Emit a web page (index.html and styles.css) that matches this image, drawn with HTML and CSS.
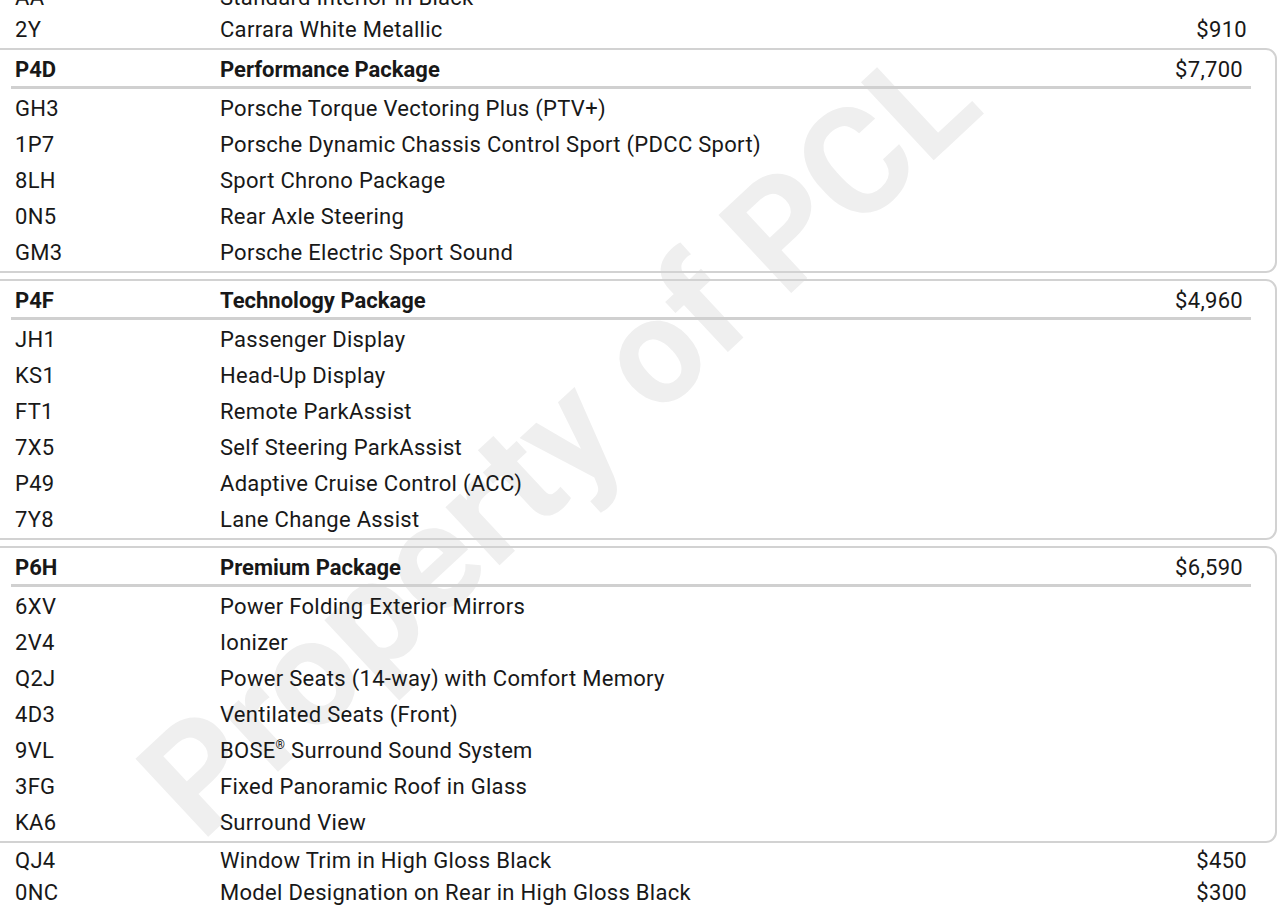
FILE: index.html
```html
<!DOCTYPE html>
<html lang="en">
<head>
<meta charset="utf-8">
<title>Options</title>
<link rel="stylesheet" href="styles.css">
</head>
<body>
<div class="sheet">
  <div class="watermark">Property of PCL</div>

  <div class="row loose"><span class="code">AA</span><span class="desc">Standard Interior in Black</span><span class="price"></span></div>
  <div class="row loose"><span class="code">2Y</span><span class="desc">Carrara White Metallic</span><span class="price">$910</span></div>

  <div class="box">
    <div class="row head"><span class="code">P4D</span><span class="desc">Performance Package</span><span class="price">$7,700</span></div>
    <div class="items">
      <div class="row item"><span class="code">GH3</span><span class="desc">Porsche Torque Vectoring Plus (PTV+)</span><span class="price"></span></div>
      <div class="row item"><span class="code">1P7</span><span class="desc">Porsche Dynamic Chassis Control Sport (PDCC Sport)</span><span class="price"></span></div>
      <div class="row item"><span class="code">8LH</span><span class="desc">Sport Chrono Package</span><span class="price"></span></div>
      <div class="row item"><span class="code">0N5</span><span class="desc">Rear Axle Steering</span><span class="price"></span></div>
      <div class="row item"><span class="code">GM3</span><span class="desc">Porsche Electric Sport Sound</span><span class="price"></span></div>
    </div>
  </div>

  <div class="box">
    <div class="row head"><span class="code">P4F</span><span class="desc">Technology Package</span><span class="price">$4,960</span></div>
    <div class="items">
      <div class="row item"><span class="code">JH1</span><span class="desc">Passenger Display</span><span class="price"></span></div>
      <div class="row item"><span class="code">KS1</span><span class="desc">Head-Up Display</span><span class="price"></span></div>
      <div class="row item"><span class="code">FT1</span><span class="desc">Remote ParkAssist</span><span class="price"></span></div>
      <div class="row item"><span class="code">7X5</span><span class="desc">Self Steering ParkAssist</span><span class="price"></span></div>
      <div class="row item"><span class="code">P49</span><span class="desc">Adaptive Cruise Control (ACC)</span><span class="price"></span></div>
      <div class="row item"><span class="code">7Y8</span><span class="desc">Lane Change Assist</span><span class="price"></span></div>
    </div>
  </div>

  <div class="box box-last">
    <div class="row head"><span class="code">P6H</span><span class="desc">Premium Package</span><span class="price">$6,590</span></div>
    <div class="items">
      <div class="row item"><span class="code">6XV</span><span class="desc">Power Folding Exterior Mirrors</span><span class="price"></span></div>
      <div class="row item"><span class="code">2V4</span><span class="desc">Ionizer</span><span class="price"></span></div>
      <div class="row item"><span class="code">Q2J</span><span class="desc">Power Seats (14-way) with Comfort Memory</span><span class="price"></span></div>
      <div class="row item"><span class="code">4D3</span><span class="desc">Ventilated Seats (Front)</span><span class="price"></span></div>
      <div class="row item"><span class="code">9VL</span><span class="desc">BOSE<sup class="reg">®</sup> Surround Sound System</span><span class="price"></span></div>
      <div class="row item"><span class="code">3FG</span><span class="desc">Fixed Panoramic Roof in Glass</span><span class="price"></span></div>
      <div class="row item"><span class="code">KA6</span><span class="desc">Surround View</span><span class="price"></span></div>
    </div>
  </div>

  <div class="row loose"><span class="code">QJ4</span><span class="desc">Window Trim in High Gloss Black</span><span class="price">$450</span></div>
  <div class="row loose"><span class="code">0NC</span><span class="desc">Model Designation on Rear in High Gloss Black</span><span class="price">$300</span></div>
</div>
</body>
</html>
```

FILE: styles.css
```css
html {
  background: #ffffff;
}

html, body {
  margin: 0;
  padding: 0;
  overflow: hidden;
}

body {
  font-family: Roboto, "Liberation Sans", Arial, sans-serif;
  font-size: 22px;
  letter-spacing: 0.3px;
  color: #181818;
}

.sheet {
  position: relative;
  margin: -18px 0 0 -14px;
  width: 1291px;
}

.watermark {
  position: absolute;
  left: 573px;
  top: 458px;
  transform: translate(-50%, -50%) rotate(-43deg);
  font-family: Roboto, "Liberation Sans", Arial, sans-serif;
  font-weight: 700;
  font-size: 150px;
  letter-spacing: 0;
  line-height: 1;
  white-space: nowrap;
  color: #efefef;
  z-index: -1;
  pointer-events: none;
}

.row {
  display: grid;
  grid-template-columns: 205px 1fr auto;
  align-items: center;
  width: 1240px;
  box-sizing: border-box;
  padding: 0 4px;
}

.loose {
  margin-left: 25px;
  height: 32px;
  line-height: 32px;
}

.box {
  border: 2px solid #d2d2d2;
  border-radius: 11px;
  margin: 2px 0 6px;
}

.box-last {
  margin-bottom: 2px;
}

.head {
  margin-left: 23px;
  padding-top: 3px;
  height: 39px;
  line-height: 33px;
  align-items: start;
  font-weight: 700;
  letter-spacing: 0;
  border-bottom: 3px solid #d0d0d0;
}

.head .price {
  font-weight: 400;
  letter-spacing: 0.3px;
  padding-right: 4px;
}

.items {
  padding-top: 2px;
}

.item {
  margin-left: 23px;
  height: 36px;
  line-height: 36px;
}

.price {
  text-align: right;
}

.reg {
  font-size: 12px;
  line-height: 0;
  vertical-align: 9px;
}
```
